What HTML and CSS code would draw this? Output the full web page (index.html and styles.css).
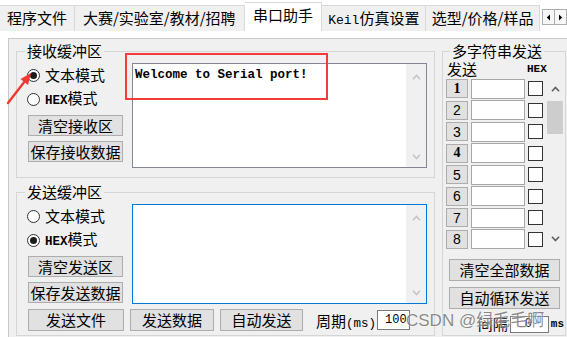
FILE: index.html
```html
<!DOCTYPE html>
<html lang="zh-CN">
<head>
<meta charset="utf-8">
<title>串口助手</title>
<link rel="stylesheet" href="styles.css">
</head>
<body>
<div class="window">
  <nav class="tabbar">
    <div class="tab tab-files">程序文件</div>
    <div class="tab tab-contest">大赛/实验室/教材/招聘</div>
    <div class="tab tab-serial active">串口助手</div>
    <div class="tab tab-keil"><span class="latin">Keil</span>仿真设置</div>
    <div class="tab tab-price">选型/价格/样品</div>
    <div class="tab-scroll">
      <span class="scroll-btn"><svg width="5" height="7" viewBox="0 0 5 7"><path d="M4 0.5 L0.8 3.5 L4 6.5 Z" fill="#000"/></svg></span>
      <span class="scroll-btn"><svg width="5" height="7" viewBox="0 0 5 7"><path d="M1 0.5 L4.2 3.5 L1 6.5 Z" fill="#000"/></svg></span>
    </div>
  </nav>

  <main class="page">
    <div class="left-col">
      <fieldset class="group recv">
        <legend>接收缓冲区</legend>
        <div class="group-body">
          <div class="controls">
            <label class="radio"><span class="radio-dot checked"></span><span class="radio-text">文本模式</span></label>
            <label class="radio"><span class="radio-dot"></span><span class="radio-text"><span class="hex">HEX</span>模式</span></label>
            <button class="btn">清空接收区</button>
            <button class="btn">保存接收数据</button>
          </div>
          <div class="textbox">
            <div class="textbox-content">Welcome to Serial port!</div>
            <div class="vscroll">
              <svg class="chev" width="9" height="6" viewBox="0 0 9 6"><path d="M1 5.2 L4.5 1.4 L8 5.2" /></svg>
              <svg class="chev" width="9" height="6" viewBox="0 0 9 6"><path d="M1 0.8 L4.5 4.6 L8 0.8" /></svg>
            </div>
          </div>
        </div>
      </fieldset>

      <fieldset class="group send">
        <legend>发送缓冲区</legend>
        <div class="group-body">
          <div class="controls">
            <label class="radio"><span class="radio-dot"></span><span class="radio-text">文本模式</span></label>
            <label class="radio"><span class="radio-dot checked"></span><span class="radio-text"><span class="hex">HEX</span>模式</span></label>
            <button class="btn">清空发送区</button>
            <button class="btn">保存发送数据</button>
          </div>
          <div class="textbox focused">
            <div class="textbox-content"></div>
            <div class="vscroll">
              <svg class="chev" width="9" height="6" viewBox="0 0 9 6"><path d="M1 5.2 L4.5 1.4 L8 5.2" /></svg>
              <svg class="chev" width="9" height="6" viewBox="0 0 9 6"><path d="M1 0.8 L4.5 4.6 L8 0.8" /></svg>
            </div>
          </div>
          <div class="send-actions">
            <button class="btn btn-file">发送文件</button>
            <button class="btn btn-data">发送数据</button>
            <button class="btn btn-auto">自动发送</button>
            <span class="period-label">周期<span class="latin">(ms)</span></span>
            <span class="field period-field">100</span>
          </div>
        </div>
      </fieldset>
    </div>

    <fieldset class="group multi">
      <legend>多字符串发送</legend>
      <div class="group-body">
        <div class="multi-grid">
          <span class="col-send">发送</span>
          <span class="col-hex">HEX</span>
          <button class="btn num serif">1</button><span class="line-input"></span><span class="check"></span>
          <button class="btn num">2</button><span class="line-input"></span><span class="check"></span>
          <button class="btn num">3</button><span class="line-input"></span><span class="check"></span>
          <button class="btn num serif">4</button><span class="line-input"></span><span class="check"></span>
          <button class="btn num">5</button><span class="line-input"></span><span class="check"></span>
          <button class="btn num">6</button><span class="line-input"></span><span class="check"></span>
          <button class="btn num">7</button><span class="line-input"></span><span class="check"></span>
          <button class="btn num">8</button><span class="line-input"></span><span class="check"></span>
          <div class="vscroll active-scroll">
            <svg class="chev" width="9" height="6" viewBox="0 0 9 6"><path d="M1 5.2 L4.5 1.4 L8 5.2" /></svg>
            <span class="thumb"></span>
            <svg class="chev down" width="9" height="6" viewBox="0 0 9 6"><path d="M1 0.8 L4.5 4.6 L8 0.8" /></svg>
          </div>
        </div>
        <button class="btn btn-wide">清空全部数据</button>
        <button class="btn btn-wide">自动循环发送</button>
        <div class="interval">
          <span>间隔</span>
          <span class="field interval-field">0</span>
          <span class="latin ms">ms</span>
        </div>
      </div>
    </fieldset>
  </main>

  <div class="highlight-box"></div>
  <svg class="annotation-arrow" width="40" height="110" viewBox="0 0 40 110">
    <line x1="8" y1="103" x2="25" y2="81" stroke="#ee3b32" stroke-width="2.4" stroke-linecap="round"/>
    <path d="M31 73 L28 85 L20.5 79 Z" fill="#ee3b32"/>
  </svg>
  <div class="watermark">CSDN @绿毛毛啊</div>
</div>
</body>
</html>
```

FILE: styles.css
```css
* { box-sizing: border-box; }
html, body { margin: 0; padding: 0; }
body {
  background: #fff;
  font-family: "Noto Sans CJK SC", "Noto Sans", sans-serif;
  font-size: 15px;
  color: #000;
}
.window { position: relative; width: 567px; height: 337px; overflow: hidden; }
.latin { font-family: "Liberation Mono", monospace; }

/* ---------- tabs ---------- */
.tabbar { display: flex; align-items: flex-end; height: 31px; }
.tab {
  height: 26px;
  text-align: center;
  line-height: 24px;
  white-space: nowrap;
  background: #f0f0f0;
  border-top: 1px solid #d9d9d9;
  border-right: 1px solid #d9d9d9;
}
.tab-files { width: 75px; }
.tab-contest { width: 170px; }
.tab-serial { width: 78px; }
.tab-keil { width: 104px; }
.tab-price { width: 114px; }
.tab.active { height: 29px; background: #fff; }
.tab-keil .latin { font-size: 13px; }
.tab-scroll { display: flex; align-self: flex-start; margin: 9px 0 0 2px; }
.scroll-btn {
  width: 13px; height: 16px;
  display: flex; align-items: center; justify-content: center;
  border: 1px solid #adadad; background: #f7f7f7;
}
.scroll-btn + .scroll-btn { margin-left: -1px; }

/* ---------- page ---------- */
.page {
  display: flex;
  align-items: flex-start;
  gap: 7px;
  height: 299px;
  margin: 7px 0 0 8px;
  padding: 4px 0 0 7px;
  background: #f0f0f0;
  border-top: 1px solid #c9c9c9;
  border-left: 1px solid #c9c9c9;
}
.left-col { width: 419px; flex: none; display: flex; flex-direction: column; gap: 6px; }

.group { margin: 0; padding: 0; min-width: 0; border: 1px solid #d5d5d5; }
.group legend { margin-left: 8px; padding: 0 2px; height: 16px; line-height: 16px; }

.recv .group-body,
.send .group-body {
  display: grid;
  grid-template-columns: 95px 295px;
  column-gap: 9px;
  row-gap: 5px;
  padding: 4px 7px 9px 11px;
}
.send .group-body { padding-bottom: 4px; }

.controls { display: flex; flex-direction: column; }
.radio { display: flex; align-items: center; gap: 5px; height: 24px; margin-left: -1px; }
.radio-dot {
  width: 13px; height: 13px; flex: none;
  border: 1px solid #333; border-radius: 50%; background: #fff;
  display: flex; align-items: center; justify-content: center;
}
.radio-dot.checked::after {
  content: ""; width: 7px; height: 7px; border-radius: 50%; background: #1c1c1c;
}
.radio-text { line-height: 16px; white-space: nowrap; }
.hex { font-family: "Liberation Mono", monospace; font-weight: bold; font-size: 12.5px; }

.btn {
  display: block;
  height: 21px;
  margin: 0;
  padding: 0;
  border: 1px solid #adadad;
  background: #e1e1e1;
  font-family: inherit;
  font-size: 15px;
  line-height: 18px;
  color: #000;
  white-space: nowrap;
}
.controls .btn { width: 95px; margin-top: 5px; }
.controls .radio + .btn { margin-top: 4px; }

.textbox { display: flex; background: #fff; border: 1px solid #828790; }
.textbox.focused { border-color: #0078d7; }
.recv .textbox { height: 105px; }
.send .textbox { height: 100px; }
.textbox-content {
  flex: 1;
  padding: 4px 2px;
  font-family: "Liberation Mono", monospace;
  font-size: 12.5px;
  font-weight: bold;
  line-height: 14px;
  white-space: pre;
}
.vscroll {
  width: 20px; flex: none;
  display: flex; flex-direction: column; align-items: center;
  background: #f0f0f0;
}
.textbox .vscroll { justify-content: space-between; padding: 10px 0 7px; }
.chev path { fill: none; stroke: #c3c3c3; stroke-width: 1.5; }

.send-actions { grid-column: 1 / -1; display: flex; align-items: center; height: 22px; }
.send-actions .btn { height: 22px; }
.btn-file { width: 96px; }
.btn-data { width: 84px; margin-left: 6px; }
.btn-auto { width: 83px; margin-left: 6px; }
.period-label { margin-left: 13px; white-space: nowrap; }
.period-label .latin { font-size: 12.5px; }
.field {
  display: block;
  background: #fff;
  border: 1px solid #7a7a7a;
  font-family: "Liberation Mono", monospace;
  font-size: 12px;
}
.period-field { width: 33px; height: 20px; line-height: 18px; padding-left: 7px; margin-left: 1px; }

/* ---------- multi string ---------- */
.multi { width: 124px; height: 293px; flex: none; }
.multi legend { margin-left: 7px; }
.multi .group-body { padding: 2px 0 0 3px; }
.multi-grid {
  display: grid;
  grid-template-columns: 22px 54px 15px 18px;
  grid-template-rows: 16px repeat(8, 20px);
  column-gap: 3px;
  row-gap: 1.5px;
}
.col-send { grid-column: 1 / 3; line-height: 16px; margin-left: 1px; }
.col-hex {
  grid-column: 3;
  font-family: "Liberation Mono", monospace;
  font-weight: bold;
  font-size: 11px;
  line-height: 16px;
  margin-left: -1px;
  white-space: nowrap;
}
.num {
  grid-column: 1;
  width: 22px; height: 19px;
  align-self: center;
  font-family: "Liberation Sans", sans-serif;
  font-size: 14px;
  line-height: 16px;
}
.num.serif { font-family: "Liberation Serif", serif; font-weight: bold; }
.line-input { background: #fff; border: 1px solid #a6a6a6; }
.check { width: 15px; height: 15px; align-self: center; border: 1px solid #333; background: #fff; }
.multi-grid .vscroll { grid-column: 4; grid-row: 2 / span 8; width: 18px; padding: 7px 0 7.5px; }
.active-scroll .chev path { stroke: #606060; stroke-width: 1.6; }
.thumb { width: 16px; height: 33px; margin-top: 9px; background: #cdcdcd; }
.chev.down { margin-top: auto; }

.btn-wide { width: 111px; height: 22px; margin: 9.5px 0 0 3px; }
.btn-wide + .btn-wide { margin-top: 6px; }
.interval {
  display: flex; align-items: center; justify-content: flex-end;
  gap: 2px; height: 19px; margin-top: 6px; padding-right: 1px;
  line-height: 16px;
}
.interval-field { width: 39px; height: 17px; line-height: 15px; padding-left: 14px; }
.ms { font-size: 11px; font-weight: bold; }

/* ---------- overlays ---------- */
.highlight-box {
  position: absolute; left: 125px; top: 53px;
  width: 203px; height: 47px;
  border: 2px solid #f23b3b;
}
.annotation-arrow { position: absolute; left: 0; top: 0; }
.watermark {
  position: absolute; left: 406px; top: 310px;
  font-family: "Liberation Sans", "Noto Sans CJK SC", sans-serif;
  font-size: 17px; line-height: 22px;
  color: rgba(105, 105, 105, 0.78);
  white-space: nowrap;
  text-shadow: 0 0 2px #fff;
}
```
